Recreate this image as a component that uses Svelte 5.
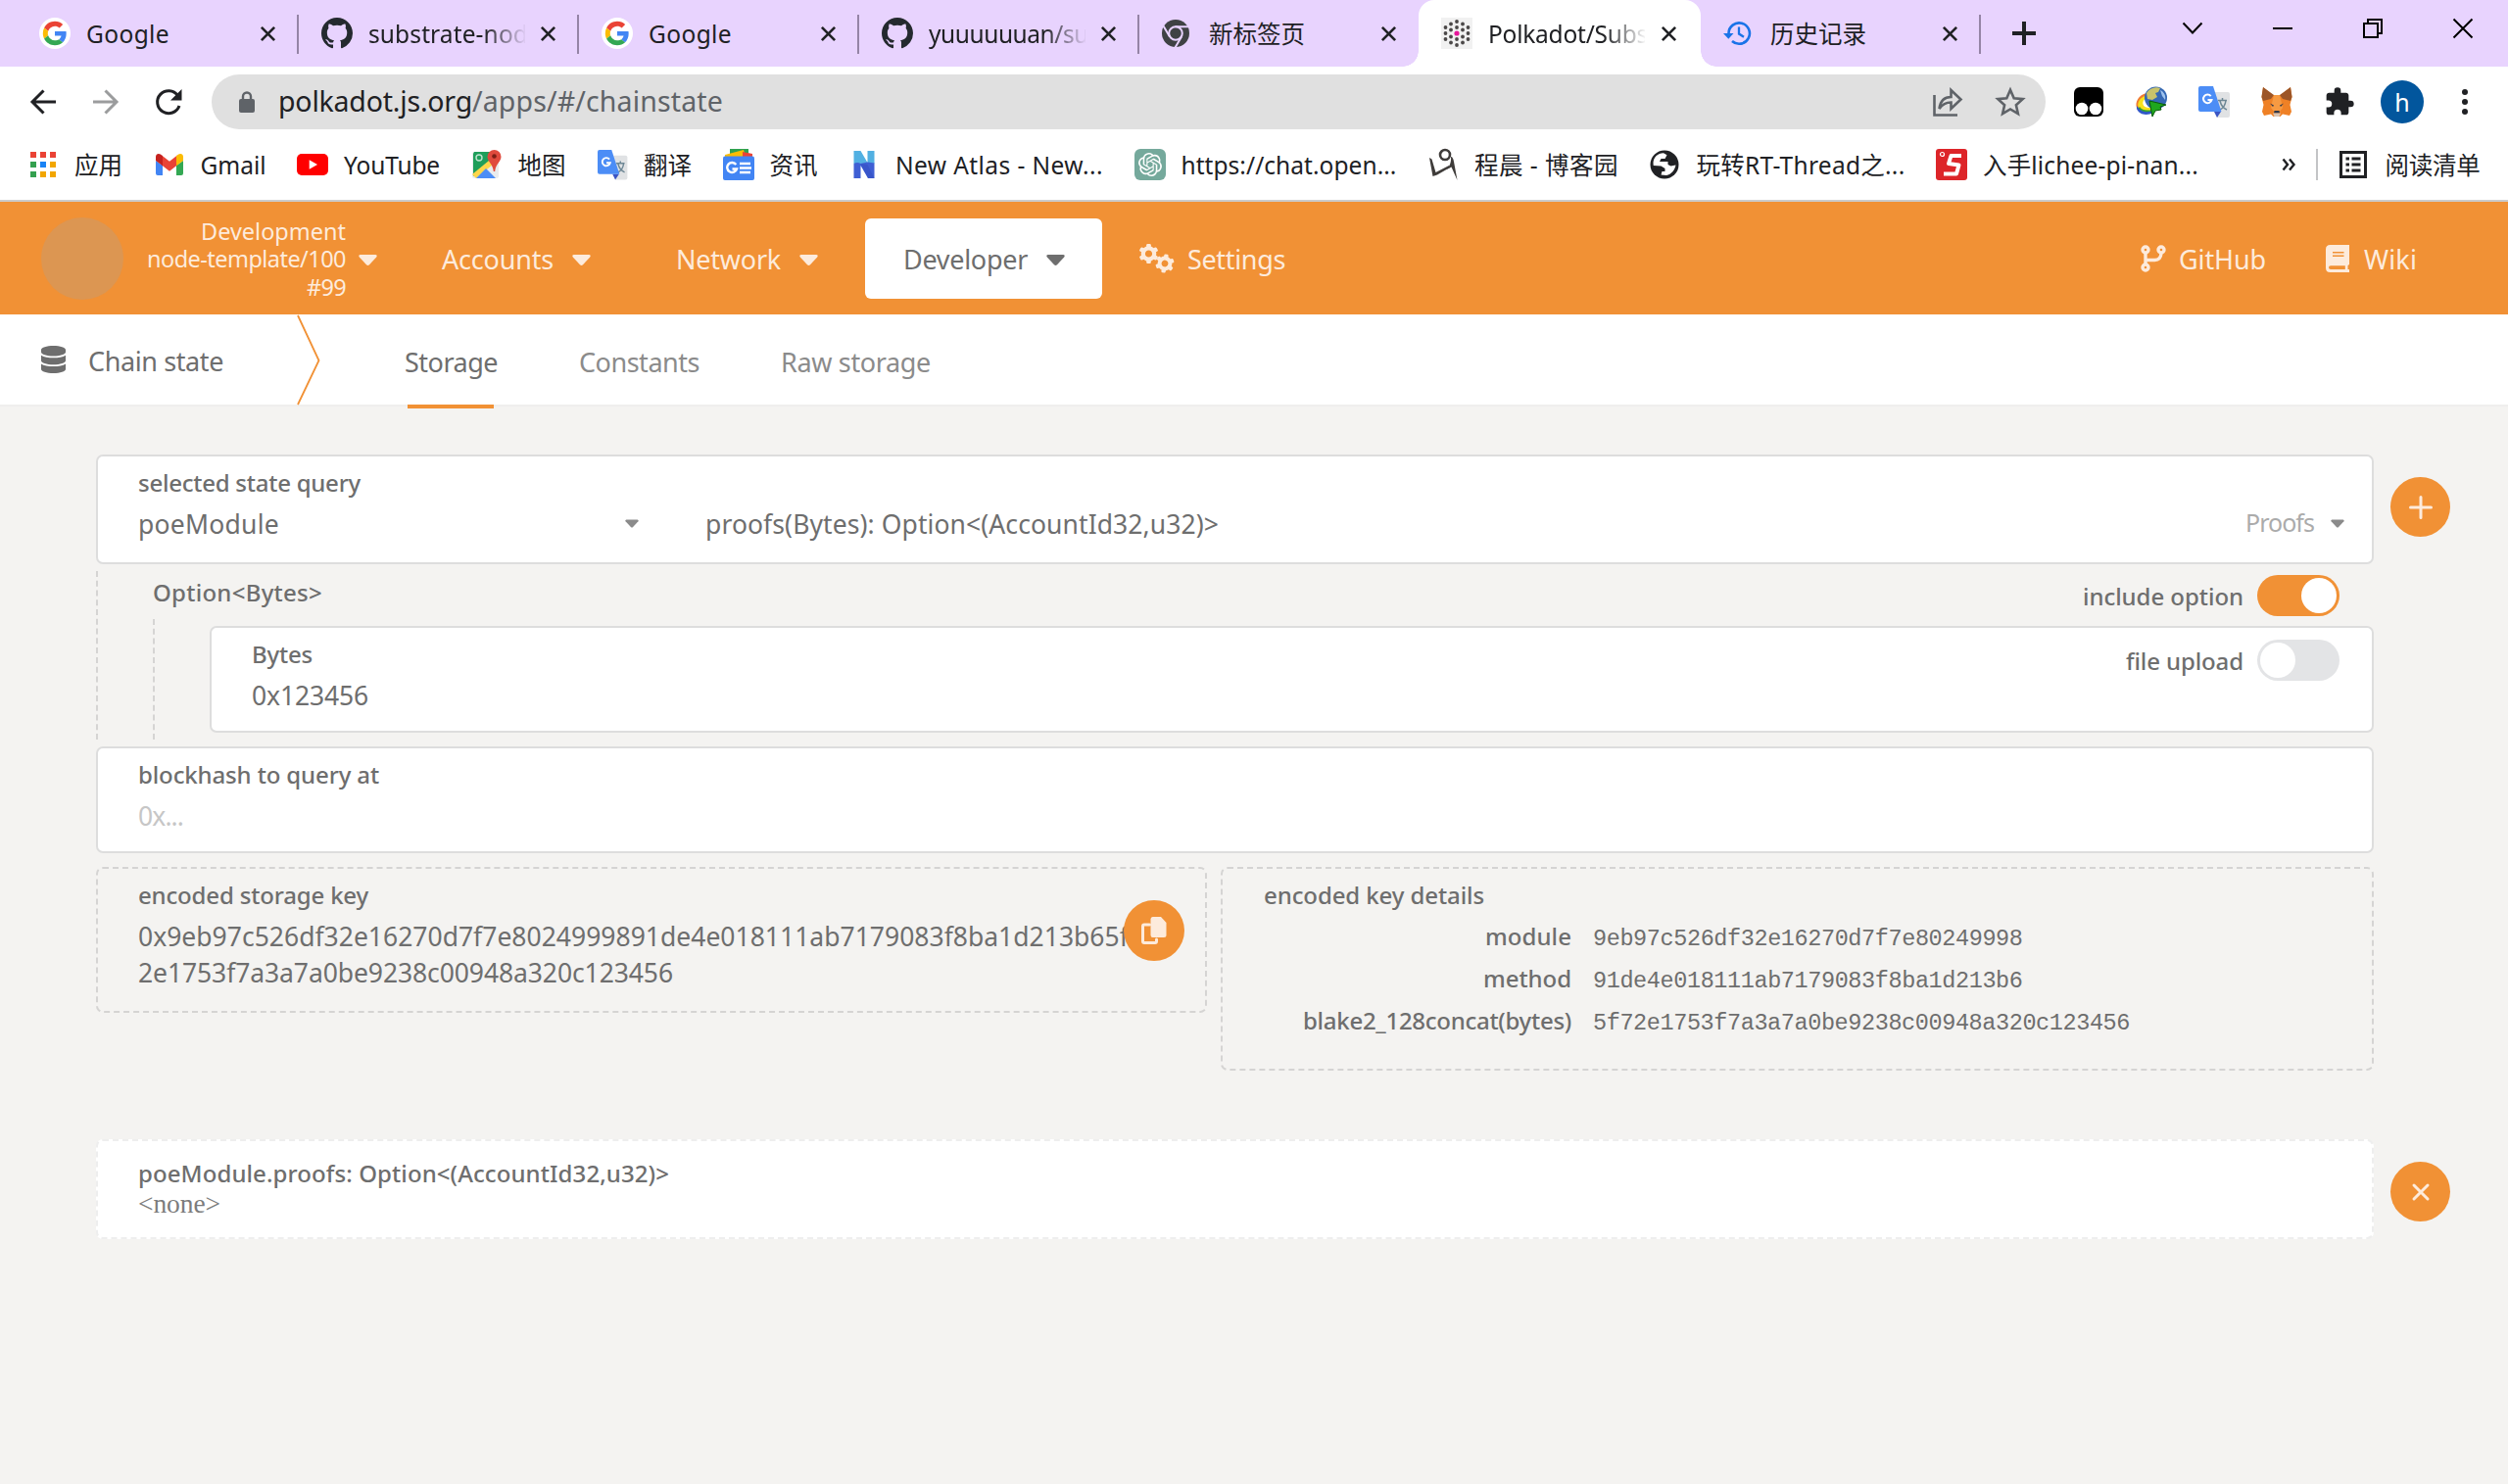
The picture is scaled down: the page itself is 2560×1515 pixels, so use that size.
<script>
  // Spreads or tightens the letters so that a text run takes the given width.
  function fit(node, width) {
    const apply = (w) => {
      node.style.letterSpacing = '0px';
      const natural = node.getBoundingClientRect().width;
      const count = [...node.textContent].length;
      node.style.letterSpacing = `${((w - natural) / count).toFixed(3)}px`;
    };
    apply(width);
    return { update: apply };
  }

  const githubMark =
    '<path transform="scale(2)" fill="#24292e" d="M8 0C3.58 0 0 3.58 0 8c0 3.54 2.29 6.53 5.47 7.59.4.07.55-.17.55-.38 0-.19-.01-.82-.01-1.49-2.01.37-2.53-.49-2.69-.94-.09-.23-.48-.94-.82-1.13-.28-.15-.68-.52-.01-.53.63-.01 1.08.58 1.23.82.72 1.21 1.87.87 2.33.66.07-.52.28-.87.51-1.07-1.78-.2-3.64-.89-3.64-3.95 0-.87.31-1.59.82-2.15-.08-.2-.36-1.02.08-2.12 0 0 .67-.21 2.2.82.64-.18 1.32-.27 2-.27.68 0 1.36.09 2 .27 1.53-1.04 2.2-.82 2.2-.82.44 1.1.16 1.92.08 2.12.51.56.82 1.27.82 2.15 0 3.07-1.87 3.75-3.65 3.95.29.25.54.73.54 1.48 0 1.07-.01 1.93-.01 2.2 0 .21.15.46.55.38A8.013 8.013 0 0016 8c0-4.42-3.58-8-8-8z"/>';

  const translateMark =
    '<path fill="#e0e2e4" d="M12 6h18a2 2 0 0 1 2 2v22a2 2 0 0 1-2 2H19z"/><path fill="#3a55c4" d="M16 26h7l-4 6z"/><path fill="none" stroke="#6d8795" stroke-width="1.5" d="M20 14.500h9M24.500 12v2.500M22 24c4-2 5.500-5 6-9.500M22 15c1 4 3.500 7.500 7 9"/><path fill="#4c8df6" d="M2 0h13l8.500 26H2a2 2 0 0 1-2-2V2a2 2 0 0 1 2-2z"/><path fill="none" stroke="#fff" stroke-width="2" d="M12.700 10.200A4.300 4.300 0 1 0 13.500 14H9.500"/>';

  const icons = {
    google:
      '<circle cx="16" cy="16" r="16" fill="#fff"/><g transform="translate(3.800 3.800) scale(.508)"><path fill="#EA4335" d="M24 9.500c3.540 0 6.710 1.220 9.210 3.600l6.850-6.850C35.900 2.380 30.470 0 24 0 14.620 0 6.510 5.380 2.560 13.220l7.980 6.190C12.430 13.720 17.740 9.500 24 9.500z"/><path fill="#4285F4" d="M46.980 24.550c0-1.570-.15-3.090-.38-4.550H24v9.020h12.940c-.58 2.960-2.260 5.480-4.780 7.180l7.730 6c4.510-4.180 7.090-10.360 7.090-17.650z"/><path fill="#FBBC05" d="M10.530 28.590c-.48-1.450-.76-2.990-.76-4.590s.27-3.140.76-4.590l-7.980-6.190C.92 16.460 0 20.120 0 24s.92 7.540 2.560 10.780z"/><path fill="#34A853" d="M24 48c6.480 0 11.930-2.130 15.890-5.810l-7.730-6c-2.150 1.450-4.920 2.300-8.160 2.300-6.260 0-11.570-4.220-13.470-9.910l-7.980 6.190C6.510 42.620 14.620 48 24 48z"/></g>',
    github: githubMark,
    chrome:
      '<circle cx="14" cy="16" r="14" fill="#3f4244"/><circle cx="14" cy="16" r="6.800" fill="none" stroke="#e8d3fe" stroke-width="2"/><path fill="none" stroke="#e8d3fe" stroke-width="2" d="M13.500 9.200H27M8 19.500L1.500 8.500M20 19.500l-6.500 11"/>',
    history:
      '<g fill="none" stroke="#1a73e8" stroke-width="2.600"><path d="M5.500 17.500V16A10.700 10.700 0 1 1 9 24"/><path stroke-width="2.300" d="M16 9.500v7l5 3.200"/></g><path fill="#1a73e8" d="M0 16h10.500l-5.200 5.800z"/>',
    apps:
      '<g transform="translate(3 3)"><path fill="#ea4335" d="M0 0h6v6H0zM10 0h6v6h-6zM20 0h6v6h-6z"/><path fill="#34a04f" d="M0 10h6v6H0zM0 20h6v6H0z"/><path fill="#1a83f5" d="M10 10h6v6h-6z"/><path fill="#f2a600" d="M20 10h6v6h-6zM10 20h6v6h-6zM20 20h6v6h-6z"/></g>',
    gmail:
      '<path fill="#4285f4" d="M2 12l7 5v10H4a2 2 0 0 1-2-2z"/><path fill="#34a853" d="M30 12l-7 5v10h5a2 2 0 0 0 2-2z"/><path fill="#ea4335" d="M8 6.500l8 6.200 8-6.200v10l-8 6.300-8-6.300z"/><path fill="#c5221f" d="M2 8c0-3 3-3.800 5.200-2.200L9 7.200v10L2 12z"/><path fill="#fbbc04" d="M30 8c0-3-3-3.800-5.200-2.200L23 7.200v10l7-5.200z"/>',
    youtube:
      '<rect y="5" width="32" height="22" rx="5" fill="#f00"/><path fill="#fff" d="M12.700 11.200v9.600L21 16z"/>',
    maps:
      '<rect x="1" y="3" width="27" height="27" rx="2" fill="#e9ebed"/><path fill="#1f9e5a" d="M3 3h17v9L2 28V5z"/><path fill="#fdd64b" d="M1 26L18 12l4 4L5 30z"/><path fill="#4c8df6" d="M5 30l10-10 10 10z"/><circle cx="8" cy="9" r="3" fill="none" stroke="#bfe3cf" stroke-width="1.400"/><path fill="#e04a3d" d="M23.500 1a7 7 0 0 1 7 7c0 5-5.500 7-6.300 15h-1.400C22 15 16.500 13 16.500 8a7 7 0 0 1 7-7z"/><circle cx="23.500" cy="7.500" r="2.300" fill="#7c1f16"/>',
    translate: '<g transform="translate(1 1) scale(.95)">' + translateMark + '</g>',
    news:
      '<path fill="#2fa24f" d="M7 0h19v6H7z"/><path fill="#fbbc04" d="M2 6l19-5 2 7H2z"/><path fill="#ea4335" d="M20 3l10 2v3H20z"/><rect y="7.500" width="32" height="24.500" rx="2" fill="#4285f4"/><path fill="none" stroke="#fff" stroke-width="2.400" d="M13.300 16A5 5 0 1 0 14 20.500H9.500M17 15h11M17 19.500h12M17 24h11"/>',
    atlas:
      '<path fill="#52b0e2" d="M5.500 2h7l7 12V2h7v13H5.500z"/><path fill="#3f5fd4" d="M5.500 15c3-1.500 5-1 7 0l7-1.500 7 1V30h-6.500l-7.500-13v13h-7z"/><path fill="#2b46b8" d="M12.500 15l7 1 7 14h-6.500z" opacity=".35"/>',
    openai:
      '<rect width="32" height="32" rx="6" fill="#75a99c"/><g transform="translate(4 4)"><path fill="#fff" d="M22.282 9.821a5.985 5.985 0 0 0-.516-4.910 6.046 6.046 0 0 0-6.510-2.900A6.065 6.065 0 0 0 4.981 4.182a5.985 5.985 0 0 0-3.998 2.900 6.046 6.046 0 0 0 .743 7.097 5.980 5.980 0 0 0 .511 4.911 6.051 6.051 0 0 0 6.515 2.900A5.985 5.985 0 0 0 13.260 24a6.056 6.056 0 0 0 5.772-4.206 5.989 5.989 0 0 0 3.998-2.900 6.056 6.056 0 0 0-.748-7.073zm-9.022 12.608a4.476 4.476 0 0 1-2.876-1.041l.142-.080 4.778-2.758a.795.795 0 0 0 .393-.681v-6.737l2.020 1.169a.071.071 0 0 1 .038.052v5.583a4.504 4.504 0 0 1-4.495 4.494zM3.599 18.304a4.471 4.471 0 0 1-.535-3.014l.142.085 4.783 2.758a.771.771 0 0 0 .781 0l5.843-3.369v2.332a.080.080 0 0 1-.033.062L9.740 19.950a4.499 4.499 0 0 1-6.141-1.646zM2.341 7.896a4.485 4.485 0 0 1 2.366-1.973V11.600a.766.766 0 0 0 .388.677l5.814 3.354-2.020 1.169a.076.076 0 0 1-.071 0l-4.830-2.787A4.504 4.504 0 0 1 2.341 7.872zm16.596 3.856L13.104 8.364 15.119 7.200a.076.076 0 0 1 .071 0l4.830 2.791a4.494 4.494 0 0 1-.677 8.104v-5.677a.790.790 0 0 0-.407-.667zm2.011-3.023l-.142-.085-4.774-2.782a.776.776 0 0 0-.785 0L9.409 9.230V6.897a.066.066 0 0 1 .028-.062l4.830-2.787a4.499 4.499 0 0 1 6.680 4.660zM8.307 12.863l-2.020-1.164a.080.080 0 0 1-.038-.057V6.074a4.499 4.499 0 0 1 7.376-3.454l-.142.081L8.704 5.459a.795.795 0 0 0-.393.681zm1.098-2.365l2.602-1.500 2.607 1.500v2.999l-2.597 1.500-2.607-1.500z"/></g>',
    stroke:
      '<g fill="#3f3c3a"><path d="M2 9l2.500 1.500 4 13.500L22 17l1 2-13 7.500L5.500 28z"/><path d="M24 8c1.500 0 2.500 2 3 5l3.500 19-6-13.500-5 2.500c3-3 5-7 4.500-13z"/></g><circle cx="18" cy="6" r="5" fill="none" stroke="#3f3c3a" stroke-width="2.600"/>',
    globe:
      '<circle cx="16" cy="16" r="14.500" fill="#202124"/><path fill="#fff" d="M4.500 14C5 8 9 4.500 15 4.200l3.500 2-2 3.800h-4l-1.500 3h8.500v3l3 1.500 5-1c-.8 5-4.500 9.500-9.500 10.500l-5.500-.5 1-3.500h3v-3l-4-2.500L4.700 17z"/>',
    csdn:
      '<rect width="32" height="32" rx="3" fill="#dd2529"/><circle cx="6.500" cy="5.500" r="2" fill="none" stroke="#fff" stroke-width="1.200"/><path fill="none" stroke="#fff" stroke-width="4" stroke-linejoin="round" d="M26 7H15.500l-2.500 8 10.500 1.500-2.500 9H8"/>'
  };

  const polkadotDots = [
    [0, -12], [0, -6], [0, 6], [0, 12], [-6, -9.5], [-6, -3.5], [-6, 3.5], [-6, 9.5],
    [6, -9.5], [6, -3.5], [6, 3.5], [6, 9.5], [-11.5, -6], [-11.5, 0], [-11.5, 6],
    [11.5, -6], [11.5, 0], [11.5, 6]
  ];

  const leftTabs = [
    { icon: 'google', title: 'Google', width: 85 },
    { icon: 'github', title: 'substrate-nod', width: 163, faded: true },
    { icon: 'google', title: 'Google', width: 85 },
    { icon: 'github', title: 'yuuuuuuan/su', width: 163, faded: true },
    { icon: 'chrome', title: '新标签页', width: 98, last: true }
  ];

  const bookmarks = [
    { icon: 'apps', title: '应用', width: 49 },
    { icon: 'gmail', title: 'Gmail', width: 67 },
    { icon: 'youtube', title: 'YouTube', width: 98 },
    { icon: 'maps', title: '地图', width: 49 },
    { icon: 'translate', title: '翻译', width: 49 },
    { icon: 'news', title: '资讯', width: 49 },
    { icon: 'atlas', title: 'New Atlas - New...', width: 212 },
    { icon: 'openai', title: 'https://chat.open...', width: 220 },
    { icon: 'stroke', title: '程晨 - 博客园', width: 147 },
    { icon: 'globe', title: '玩转RT-Thread之...', width: 213 },
    { icon: 'csdn', title: '入手lichee-pi-nan...', width: 220 }
  ];

  const keyDetails = [
    { name: 'module', nameWidth: 88, value: '9eb97c526df32e16270d7f7e80249998', width: 438.5 },
    { name: 'method', nameWidth: 90, value: '91de4e018111ab7179083f8ba1d213b6', width: 438.5 },
    { name: 'blake2_128concat(bytes)', nameWidth: 274, value: '5f72e1753f7a3a7a0be9238c00948a320c123456', width: 548 }
  ];
</script>

{#snippet glyph(name)}
  <svg class="glyph" viewBox="0 0 32 32">{@html icons[name]}</svg>
{/snippet}

{#snippet text(value, width, kind = '')}
  <span class="text {kind}" use:fit={width}>{value}</span>
{/snippet}

{#snippet closeMark()}
  <svg class="close" viewBox="0 0 18 18"><path d="M2 2l14 14M16 2L2 16" /></svg>
{/snippet}

{#snippet caret()}
  <svg class="caret" viewBox="0 0 19 11"><path d="M1.800 0h15.400q2.500.5 1 2.500L11 10.300q-1.500 1.400-3 0L.8 2.500Q-.7.5 1.800 0z" /></svg>
{/snippet}

{#snippet gear()}
  <circle r="5.700" fill="none" stroke="currentColor" stroke-width="4.200" />
  {#each [0, 60, 120, 180, 240, 300] as turn}
    <rect x="-2.300" y="-10" width="4.600" height="5" rx="1.200" fill="currentColor" transform="rotate({turn})" />
  {/each}
{/snippet}

<div class="window">
  <div class="tabs">
    {#each leftTabs as tab}
      <div class="tab" class:last={tab.last}>
        {@render glyph(tab.icon)}
        <div class="title" class:faded={tab.faded}>{@render text(tab.title, tab.width)}</div>
        {@render closeMark()}
      </div>
    {/each}
    <div class="tab active">
      <svg class="glyph" viewBox="-16 -16 32 32">
        <rect x="-16" y="-16" width="32" height="32" fill="#f1f1f1" />
        {#each polkadotDots as [x, y]}<circle cx={x} cy={y} r="1.900" fill="#4b4848" />{/each}
        <circle r="2.600" fill="#e6179a" />
      </svg>
      <div class="title faded">{@render text('Polkadot/Subs', 163)}</div>
      {@render closeMark()}
    </div>
    <div class="tab history">
      {@render glyph('history')}
      <div class="title">{@render text('历史记录', 98)}</div>
      {@render closeMark()}
    </div>
    <svg class="new-tab" viewBox="0 0 24 24"><path d="M12 0v24M0 12h24" /></svg>
    <div class="window-controls">
      <svg width="22" height="22" viewBox="0 0 22 22"><path d="M1.500 5.500l9.500 10 9.500-10" /></svg>
      <svg width="22" height="22" viewBox="0 0 22 22"><path d="M1 11h20" /></svg>
      <svg width="22" height="22" viewBox="0 0 22 22"><path d="M6 5V2h14v14h-3.500M2 6h14v14H2z" /></svg>
      <svg width="22" height="22" viewBox="0 0 22 22"><path d="M1.500 1.500l19 19M20.500 1.500l-19 19" /></svg>
    </div>
  </div>

  <div class="toolbar">
    <svg class="nav-icon" viewBox="0 0 28 28"><path d="M27 14H3M14.500 2.500L3 14l11.500 11.500" /></svg>
    <svg class="nav-icon disabled" viewBox="0 0 28 28"><path d="M1 14h24M13.500 2.500L25 14 13.500 25.500" /></svg>
    <svg class="nav-icon" viewBox="0 0 28 28"><path d="M23.500 7.500A11.500 11.500 0 1 0 25 18" /><path class="solid" d="M27.500 1v11.500H16z" /></svg>
    <div class="address">
      <svg class="lock" viewBox="0 0 16 22"><rect y="8" width="16" height="14" rx="2" /><path d="M4 9V5.500a4 4 0 0 1 8 0V9" /></svg>
      <div class="url">{@render text('polkadot.js.org', 198, 'host')}{@render text('/apps/#/chainstate', 256)}</div>
      <svg class="share" viewBox="0 0 30 30"><path d="M1.500 8v20.500H25M6.500 22c1-8 5-12 12-12V3l10 9.500-10 9.500v-6.500c-5 0-8.500 1.500-12 6.500z" /></svg>
      <svg class="star" viewBox="0 0 30 30"><path d="M15 2.800l3.700 8.400 9 .9-6.800 6.100 2 9L15 22.500l-7.900 4.700 2-9L2.300 12.100l9-.9z" /></svg>
    </div>
    <div class="extensions">
      <svg class="glyph" viewBox="0 0 32 32"><rect x="1" y="1" width="30" height="30" rx="6" fill="#000" /><circle cx="9" cy="23" r="6.300" fill="#fff" /><circle cx="23" cy="23" r="6.300" fill="#fff" /></svg>
      <svg class="glyph" viewBox="0 0 32 32">
        <path fill="#ef7a31" d="M11 7C3 9-1 16 1 22c2 5 7 7 15 5l-1-4C5 24 4 14 12 10z" />
        <path fill="#f5e11d" d="M9 10C3 13 1 18 3 22c2 4 7 5 13 3v-3C6 23 5 15 11 12z" />
        <path fill="#35a52c" d="M2 23c4 6 10 6 16 4l-1-3c-6 1-10 1-13-3z" />
        <path fill="#3157c8" d="M1 23c3 7 11 7 17 4v-2C11 27 6 27 1 20z" />
        <circle cx="20.500" cy="12" r="11.500" fill="#3568b4" />
        <path fill="#c9c36a" d="M11 7c3-5 9-7 14-5l-2 4-3 1 2 4-5 3-5-1z" />
        <path fill="#9fc3ee" d="M25 4c4 2 6 6 5 10l-3-4z" />
        <path fill="#1fa71d" stroke="#0a5a0c" d="M14 15l17 4-6 2 1 3-6 1-3 6-1-5z" />
      </svg>
      <svg class="glyph" viewBox="0 0 32 32">{@html translateMark}</svg>
      <svg class="glyph" viewBox="0 0 32 32">
        <path fill="#ef8126" d="M2 1l10 8h8l10-8 1.500 10-2 8L31 26l-2 4-7-1.500-2.500 2.500h-7L10 28.500 3 30l-2-4 1.500-7-2-8z" />
        <path fill="#9c5527" d="M2 1l11 8-3 4-8 2-1.500-4zM30 1L19 9l3 4 8 2 1.500-4z" />
        <path fill="#f69a42" d="M13 9h6l3 13-3 4h-6l-3-4z" />
        <path fill="#30394b" d="M9 17.500l4 2-1 1.500zM23 17.500l-4 2 1 1.500zM13.500 25h5l.5 2.500h-6z" />
        <path fill="#d9c4b3" d="M12 27.500h8l-1.500 3.500h-5z" />
      </svg>
      <svg class="glyph" viewBox="0 0 24 24"><path fill="#202124" d="M20.500 11H19V7c0-1.100-.9-2-2-2h-4V3.500a2.500 2.500 0 0 0-5 0V5H4c-1.100 0-2 .9-2 2v3.800h1.500a2.700 2.700 0 0 1 0 5.400H2V20c0 1.100.9 2 2 2h3.800v-1.500a2.700 2.700 0 0 1 5.400 0V22H17c1.100 0 2-.9 2-2v-4h1.500a2.500 2.500 0 0 0 0-5z" /></svg>
    </div>
    <div class="avatar">h</div>
    <svg class="menu-dots" viewBox="0 0 8 28"><circle cx="4" cy="4" r="3" /><circle cx="4" cy="14" r="3" /><circle cx="4" cy="24" r="3" /></svg>
  </div>

  <div class="bookmarks">
    {#each bookmarks as mark}
      <div class="bookmark">{@render glyph(mark.icon)}{@render text(mark.title, mark.width)}</div>
    {/each}
    <svg class="more" viewBox="0 0 14 14"><path d="M1.500 1.500L6 7l-4.500 5.500M8 1.500L12.500 7 8 12.500" /></svg>
    <div class="rule"></div>
    <svg class="list" viewBox="0 0 28 28"><rect x="1.500" y="1.500" width="25" height="25" /><path d="M6.500 8h3.500M12.500 8h9M6.500 14h3.500M12.500 14h9M6.500 20h3.500M12.500 20h9" /></svg>
    {@render text('阅读清单', 97)}
  </div>

  <header>
    <div class="logo"></div>
    <div class="chain">
      <div>{@render text('Development', 148)}</div>
      <div>{@render text('node-template/100', 203)}</div>
      <div>{@render text('#99', 40)}</div>
    </div>
    {@render caret()}
    <div class="menu accounts">{@render text('Accounts', 114)}{@render caret()}</div>
    <div class="menu network">{@render text('Network', 107)}{@render caret()}</div>
    <div class="menu developer">{@render text('Developer', 127)}{@render caret()}</div>
    <svg class="gears" viewBox="0 0 36 30">
      <g transform="translate(9.500 10)">{@render gear()}</g>
      <g transform="translate(26 20) rotate(10) scale(.95)">{@render gear()}</g>
    </svg>
    {@render text('Settings', 100)}
    <div class="links">
      <svg class="branch" viewBox="0 0 26 28"><circle cx="5" cy="5" r="3" /><circle cx="21" cy="5" r="3" /><circle cx="5" cy="23" r="3" /><path d="M5 8v12M5 15.500h9.500q6 0 6.500-7" /></svg>
      {@render text('GitHub', 89)}
      <svg class="book" viewBox="0 0 24 28"><path fill="currentColor" fill-rule="evenodd" d="M4.500 0H24v20l-1.500 1v4H24v3H4.500Q0 28 0 23.500v-19Q0 0 4.500 0zM7 7v1.600h11.500V7zM7 10.500v1.600h11.500v-1.600zM5 21.300q-2 0-2 1.800T5 25h14.800v-3.700z" /></svg>
      {@render text('Wiki', 54)}
    </div>
  </header>

  <nav>
    <svg class="database" viewBox="0 0 448 512" preserveAspectRatio="none"><path d="M448 73.143v45.714C448 159.143 347.667 192 224 192S0 159.143 0 118.857V73.143C0 32.857 100.333 0 224 0s224 32.857 224 73.143zM448 176v102.857C448 319.143 347.667 352 224 352S0 319.143 0 278.857V176c48.125 33.143 136.208 48.572 224 48.572S399.874 209.143 448 176zm0 160v102.857C448 479.143 347.667 512 224 512S0 479.143 0 438.857V336c48.125 33.143 136.208 48.572 224 48.572S399.874 369.143 448 336z" /></svg>
    {@render text('Chain state', 138)}
    <svg class="divider" viewBox="0 0 24 92"><path d="M1 1l21.500 46L1 92" /></svg>
    <div class="sub selected">{@render text('Storage', 95)}</div>
    <div class="sub">{@render text('Constants', 123)}</div>
    <div class="sub">{@render text('Raw storage', 153)}</div>
  </nav>

  <main>
    <div class="with-button">
      <section class="card query">
        {@render text('selected state query', 227, 'label')}
        <div class="value-line">
          {@render text('poeModule', 144)}
          {@render caret()}
          {@render text('proofs(Bytes): Option<(AccountId32,u32)>', 524)}
          <div class="choice">{@render text('Proofs', 70)}{@render caret()}</div>
        </div>
      </section>
      <div class="round"><svg viewBox="0 0 24 24"><path d="M12 1.500v21M1.500 12h21" /></svg></div>
    </div>

    <div class="params">
      <div class="param-head">
        {@render text('Option<Bytes>', 173, 'label')}
        <div class="switch-line">{@render text('include option', 164, 'label')}<div class="switch on"></div></div>
      </div>
      <div class="nested">
        <section class="card bytes">
          <div>
            {@render text('Bytes', 62, 'label')}
            <div class="value-line">{@render text('0x123456', 119)}</div>
          </div>
          <div class="switch-line">{@render text('file upload', 120, 'label')}<div class="switch"></div></div>
        </section>
      </div>
    </div>

    <section class="card blockhash">
      {@render text('blockhash to query at', 246, 'label')}
      <div class="value-line placeholder">{@render text('0x...', 46)}</div>
    </section>

    <div class="keys">
      <section class="card dashed storage-key">
        {@render text('encoded storage key', 235, 'label')}
        <div class="hex">
          <div>{@render text('0x9eb97c526df32e16270d7f7e8024999891de4e018111ab7179083f8ba1d213b65f7', 1026)}</div>
          <div>{@render text('2e1753f7a3a7a0be9238c00948a320c123456', 546)}</div>
        </div>
        <div class="round copy">
          <svg viewBox="0 0 26 28"><path d="M8.500 8H3q-1.500 0-1.500 1.500V25q0 1.500 1.500 1.500h11q1.500 0 1.500-1.500v-2" /><path class="solid" d="M11.500 0H20l5.500 6v12.500Q25.500 21 23 21H11.500Q9.500 21 9.500 18.500v-16Q9.500 0 11.500 0z" /></svg>
        </div>
      </section>
      <section class="card dashed details">
        {@render text('encoded key details', 225, 'label')}
        <div class="detail-grid">
          {#each keyDetails as row}
            <div class="name">{@render text(row.name, row.nameWidth, 'label')}</div>
            <div>{@render text(row.value, row.width, 'mono')}</div>
          {/each}
        </div>
      </section>
    </div>

    <div class="with-button results">
      <section class="card dashed result">
        {@render text('poeModule.proofs: Option<(AccountId32,u32)>', 542, 'label')}
        <div class="none">{@render text('<none>', 84)}</div>
      </section>
      <div class="round"><svg viewBox="0 0 24 24"><path d="M5 5l14 14M19 5L5 19" /></svg></div>
    </div>
  </main>
</div>

<style>
  :global(body) {
    margin: 0;
    background: #f4f3f1;
  }

  .window {
    width: 2560px;
    height: 1515px;
    overflow: hidden;
    background: #f4f3f1;
    color: #202124;
    font-family: 'Noto Sans', 'Noto Sans CJK SC', sans-serif;
    font-size: 24.5px;
  }

  .window * {
    box-sizing: border-box;
  }

  .text {
    display: inline-block;
    flex: none;
    white-space: nowrap;
  }

  .window svg {
    display: block;
    flex: none;
    overflow: visible;
  }

  .glyph {
    width: 32px;
    height: 32px;
  }

  /* Tab strip */
  .tabs {
    display: flex;
    align-items: center;
    height: 68px;
    padding-left: 19px;
    background: #e8d3fe;
  }

  .tab {
    position: relative;
    display: flex;
    align-items: center;
    width: 286px;
    height: 68px;
    padding: 0 23px;
  }

  .tab:first-child {
    padding-left: 21px;
  }

  .tab::after {
    content: '';
    position: absolute;
    right: 0;
    top: 15px;
    width: 2px;
    height: 40px;
    background: #9584a6;
  }

  .tab.last::after,
  .tab.active::after {
    display: none;
  }

  .tab .title {
    width: 164px;
    margin: 2px 0 0 16px;
    overflow: hidden;
    line-height: 40px;
  }

  .tab .faded {
    width: 160px;
    mask-image: linear-gradient(to right, #000 118px, transparent 162px);
  }

  .close {
    width: 17px;
    height: 17px;
    margin-left: auto;
    fill: none;
    stroke: #202124;
    stroke-width: 2.8;
  }

  .tab.active {
    width: 288px;
    margin-left: -1px;
    padding-right: 24px;
    background: #fff;
    border-radius: 16px 16px 0 0;
  }

  .tab.active::before {
    content: '';
    position: absolute;
    left: -16px;
    bottom: 0;
    width: 16px;
    height: 16px;
    background: radial-gradient(circle at 0 0, transparent 15.5px, #fff 16px);
  }

  .tab.history::before {
    content: '';
    position: absolute;
    left: 0;
    bottom: 0;
    width: 16px;
    height: 16px;
    background: radial-gradient(circle at 100% 0, transparent 15.5px, #fff 16px);
  }

  .new-tab {
    width: 24px;
    height: 24px;
    margin-left: 32px;
    fill: none;
    stroke: #202124;
    stroke-width: 4;
  }

  .window-controls {
    display: flex;
    gap: 70px;
    margin: -10px 35px 0 auto;
    fill: none;
    stroke: #000;
    stroke-width: 2;
  }

  /* Toolbar */
  .toolbar {
    display: flex;
    align-items: center;
    height: 72px;
    padding-left: 30px;
    background: #fff;
  }

  .nav-icon {
    width: 28px;
    height: 28px;
    margin-right: 36px;
    fill: none;
    stroke: #202124;
    stroke-width: 3;
  }

  .nav-icon .solid {
    fill: #202124;
    stroke: none;
  }

  .nav-icon.disabled {
    stroke: #9b9c9d;
  }

  .address {
    display: flex;
    align-items: center;
    width: 1872px;
    height: 56px;
    margin-left: -6px;
    padding: 0 21px 0 28px;
    border-radius: 28px;
    background: #e0e0e0;
  }

  .lock {
    width: 16px;
    height: 22px;
    fill: #5f6368;
  }

  .lock path {
    fill: none;
    stroke: #5f6368;
    stroke-width: 2.4;
  }

  .url {
    margin: -2px auto 0 24px;
    color: #5f6368;
    font-size: 28.5px;
    line-height: 40px;
  }

  .host {
    color: #202124;
  }

  .share,
  .star {
    width: 30px;
    height: 30px;
    fill: none;
    stroke: #5f6368;
    stroke-width: 2.6;
  }

  .share {
    margin-right: 34px;
  }

  .extensions {
    display: flex;
    gap: 32px;
    margin-left: 28px;
  }

  .avatar {
    width: 44px;
    height: 44px;
    margin-left: 26px;
    border-radius: 50%;
    background: #02569d;
    color: #fff;
    font-size: 25px;
    line-height: 44px;
    text-align: center;
  }

  .menu-dots {
    width: 8px;
    height: 28px;
    margin-left: 38px;
    fill: #202124;
  }

  /* Bookmarks */
  .bookmarks {
    display: flex;
    align-items: center;
    height: 66px;
    padding: 0 0 8px 28px;
    background: #fff;
    border-bottom: 2px solid #ccc;
    line-height: 40px;
  }

  .bookmarks .text {
    margin-top: 2px;
  }

  .bookmark {
    display: flex;
    align-items: center;
    gap: 16px;
    margin-right: 31.5px;
  }

  .more {
    width: 14px;
    height: 14px;
    margin-left: 54px;
    fill: none;
    stroke: #202124;
    stroke-width: 2.4;
  }

  .rule {
    width: 2px;
    height: 32px;
    margin-left: 21px;
    background: #c3c4c6;
  }

  .list {
    width: 28px;
    height: 28px;
    margin: 0 18px 0 22px;
    fill: none;
    stroke: #202124;
    stroke-width: 3;
  }

  /* Application header */
  header {
    display: flex;
    align-items: center;
    height: 115px;
    padding-left: 42px;
    background: #f19135;
    color: #fdebdc;
    font-size: 27px;
    line-height: 40px;
  }

  header .text,
  nav .text {
    margin-top: 3px;
  }

  .logo {
    width: 84px;
    height: 84px;
    border-radius: 50%;
    background: #dc9652;
  }

  .chain {
    width: 227px;
    margin: 2px 13px 0 0;
    font-size: 23.5px;
    line-height: 28.5px;
    text-align: right;
  }

  .chain div {
    height: 28.5px;
  }

  .chain .text {
    margin-top: 0;
  }

  .caret {
    width: 19px;
    height: 11px;
    margin-top: 4px;
    fill: currentColor;
  }

  .menu {
    display: flex;
    align-items: center;
    gap: 19px;
  }

  .accounts {
    margin-left: 66px;
  }

  .network {
    margin-left: 87px;
  }

  .developer {
    width: 242px;
    height: 82px;
    margin-left: 48px;
    padding-left: 39px;
    border-radius: 6px;
    background: #fff;
    color: #6e6e6e;
  }

  .gears {
    width: 36px;
    height: 30px;
    margin: 0 13px 0 38px;
  }

  .links {
    display: flex;
    align-items: center;
    margin: 0 93px 0 auto;
  }

  .branch {
    width: 26px;
    height: 28px;
    margin-right: 13px;
    fill: none;
    stroke: currentColor;
    stroke-width: 3.4;
  }

  .book {
    width: 24px;
    height: 28px;
    margin: 0 15px 0 61px;
  }

  /* Section navigation */
  nav {
    display: flex;
    align-items: center;
    height: 94px;
    padding-left: 42px;
    background: #fff;
    border-bottom: 2px solid #efeeed;
    color: #6e6e6e;
    font-size: 27px;
    line-height: 40px;
  }

  .database {
    width: 25px;
    height: 28px;
    margin-right: 23px;
    fill: #6e6e6e;
  }

  .divider {
    width: 24px;
    height: 92px;
    margin: 0 86px 0 75px;
    fill: none;
    stroke: #f19135;
    stroke-width: 1.8;
  }

  .sub {
    position: relative;
    margin-right: 83px;
    padding-top: 2px;
    color: #8b8b8b;
  }

  .sub.selected {
    color: #6e6e6e;
  }

  .sub.selected::after {
    content: '';
    position: absolute;
    left: 3px;
    bottom: -27px;
    width: 88px;
    height: 4px;
    background: #f19135;
  }

  /* Content */
  main {
    padding: 49px 0 0 98px;
    color: #6e6e6e;
    font-size: 26.5px;
  }

  .with-button {
    display: flex;
    gap: 17px;
  }

  .card {
    width: 2325px;
    padding: 12px 0 0 41px;
    border: 2px solid #dddddd;
    border-radius: 7px;
    background: #fff;
  }

  .label {
    font-size: 24px;
    font-weight: 500;
    line-height: 30px;
  }

  .card > .label,
  .card > div > .label {
    display: block;
    width: max-content;
  }

  .query {
    height: 112px;
  }

  .value-line {
    display: flex;
    align-items: center;
    height: 40px;
    margin-top: 7px;
    line-height: 40px;
  }

  .value-line .caret {
    width: 14px;
    height: 9px;
    margin: -1px 68px 0 353px;
    fill: #8b8b8b;
  }

  .choice {
    display: flex;
    align-items: center;
    margin: -5px 28px 0 auto;
    color: #ababab;
    font-size: 25px;
  }

  .value-line .choice .caret {
    margin: 4px 0 0 17px;
  }

  .round {
    display: flex;
    align-items: center;
    justify-content: center;
    width: 61px;
    height: 61px;
    margin-top: 23px;
    border-radius: 50%;
    background: #f19135;
  }

  .round svg {
    width: 24px;
    height: 24px;
    fill: none;
    stroke: #fdebdc;
    stroke-width: 3;
    stroke-linecap: round;
  }

  .params {
    width: 2325px;
    height: 172px;
    margin: 7px 0;
    border-left: 2px dashed #d5d4d3;
  }

  .param-head {
    display: flex;
    justify-content: space-between;
    height: 49px;
    padding: 4px 35px 0 56px;
  }

  .param-head > .label {
    margin-top: 3px;
  }

  .switch-line {
    display: flex;
    align-items: center;
    gap: 14px;
    height: 42px;
  }

  .switch-line .label {
    margin-top: 2px;
  }

  .switch {
    display: flex;
    width: 84px;
    height: 42px;
    padding: 3px;
    border-radius: 21px;
    background: #e3e4e6;
  }

  .switch.on {
    justify-content: flex-end;
    background: #f19135;
  }

  .switch::before {
    content: '';
    width: 36px;
    height: 36px;
    border-radius: 50%;
    background: #fff;
  }

  .nested {
    height: 123px;
    margin-left: 56px;
    padding: 7px 0 0 56px;
    border-left: 2px dashed #d5d4d3;
  }

  .bytes {
    display: flex;
    justify-content: space-between;
    width: 2209px;
    height: 109px;
    padding: 12px 33px 0 41px;
  }

  .bytes .value-line {
    margin-top: 7px;
  }

  .blockhash {
    height: 109px;
  }

  .placeholder {
    color: #c6c6c6;
  }

  .keys {
    display: flex;
    align-items: flex-start;
    gap: 14px;
    margin-top: 14px;
  }

  .card.dashed {
    border-style: dashed;
    border-color: #d5d4d3;
    background: none;
  }

  .storage-key {
    position: relative;
    width: 1134px;
    height: 149px;
  }

  .hex {
    margin-top: 9px;
    line-height: 37px;
  }

  .hex div {
    height: 37px;
  }

  .copy {
    position: absolute;
    right: 21px;
    top: 32px;
    width: 62px;
    height: 62px;
    margin: 0;
  }

  .copy svg {
    width: 26px;
    height: 28px;
  }

  .copy .solid {
    fill: #fdebdc;
    stroke: none;
  }

  .card.details {
    width: 1177px;
    height: 208px;
    padding-left: 42px;
  }

  .detail-grid {
    display: grid;
    grid-template-columns: 314px auto;
    grid-auto-rows: 43px;
    column-gap: 22px;
    margin-top: 5px;
    line-height: 43px;
  }

  .detail-grid .name {
    text-align: right;
  }

  .mono {
    font-family: 'Liberation Mono', monospace;
    font-size: 23.5px;
  }

  .results {
    margin-top: 70px;
  }

  .card.result {
    height: 102px;
    padding-top: 18px;
    border-color: #eeeeee;
    background: #fff;
  }

  .none {
    height: 32px;
    font-family: 'Liberation Serif', 'Noto Sans CJK SC', serif;
    font-size: 27.5px;
    line-height: 32px;
    color: #7c7c7c;
  }
</style>
